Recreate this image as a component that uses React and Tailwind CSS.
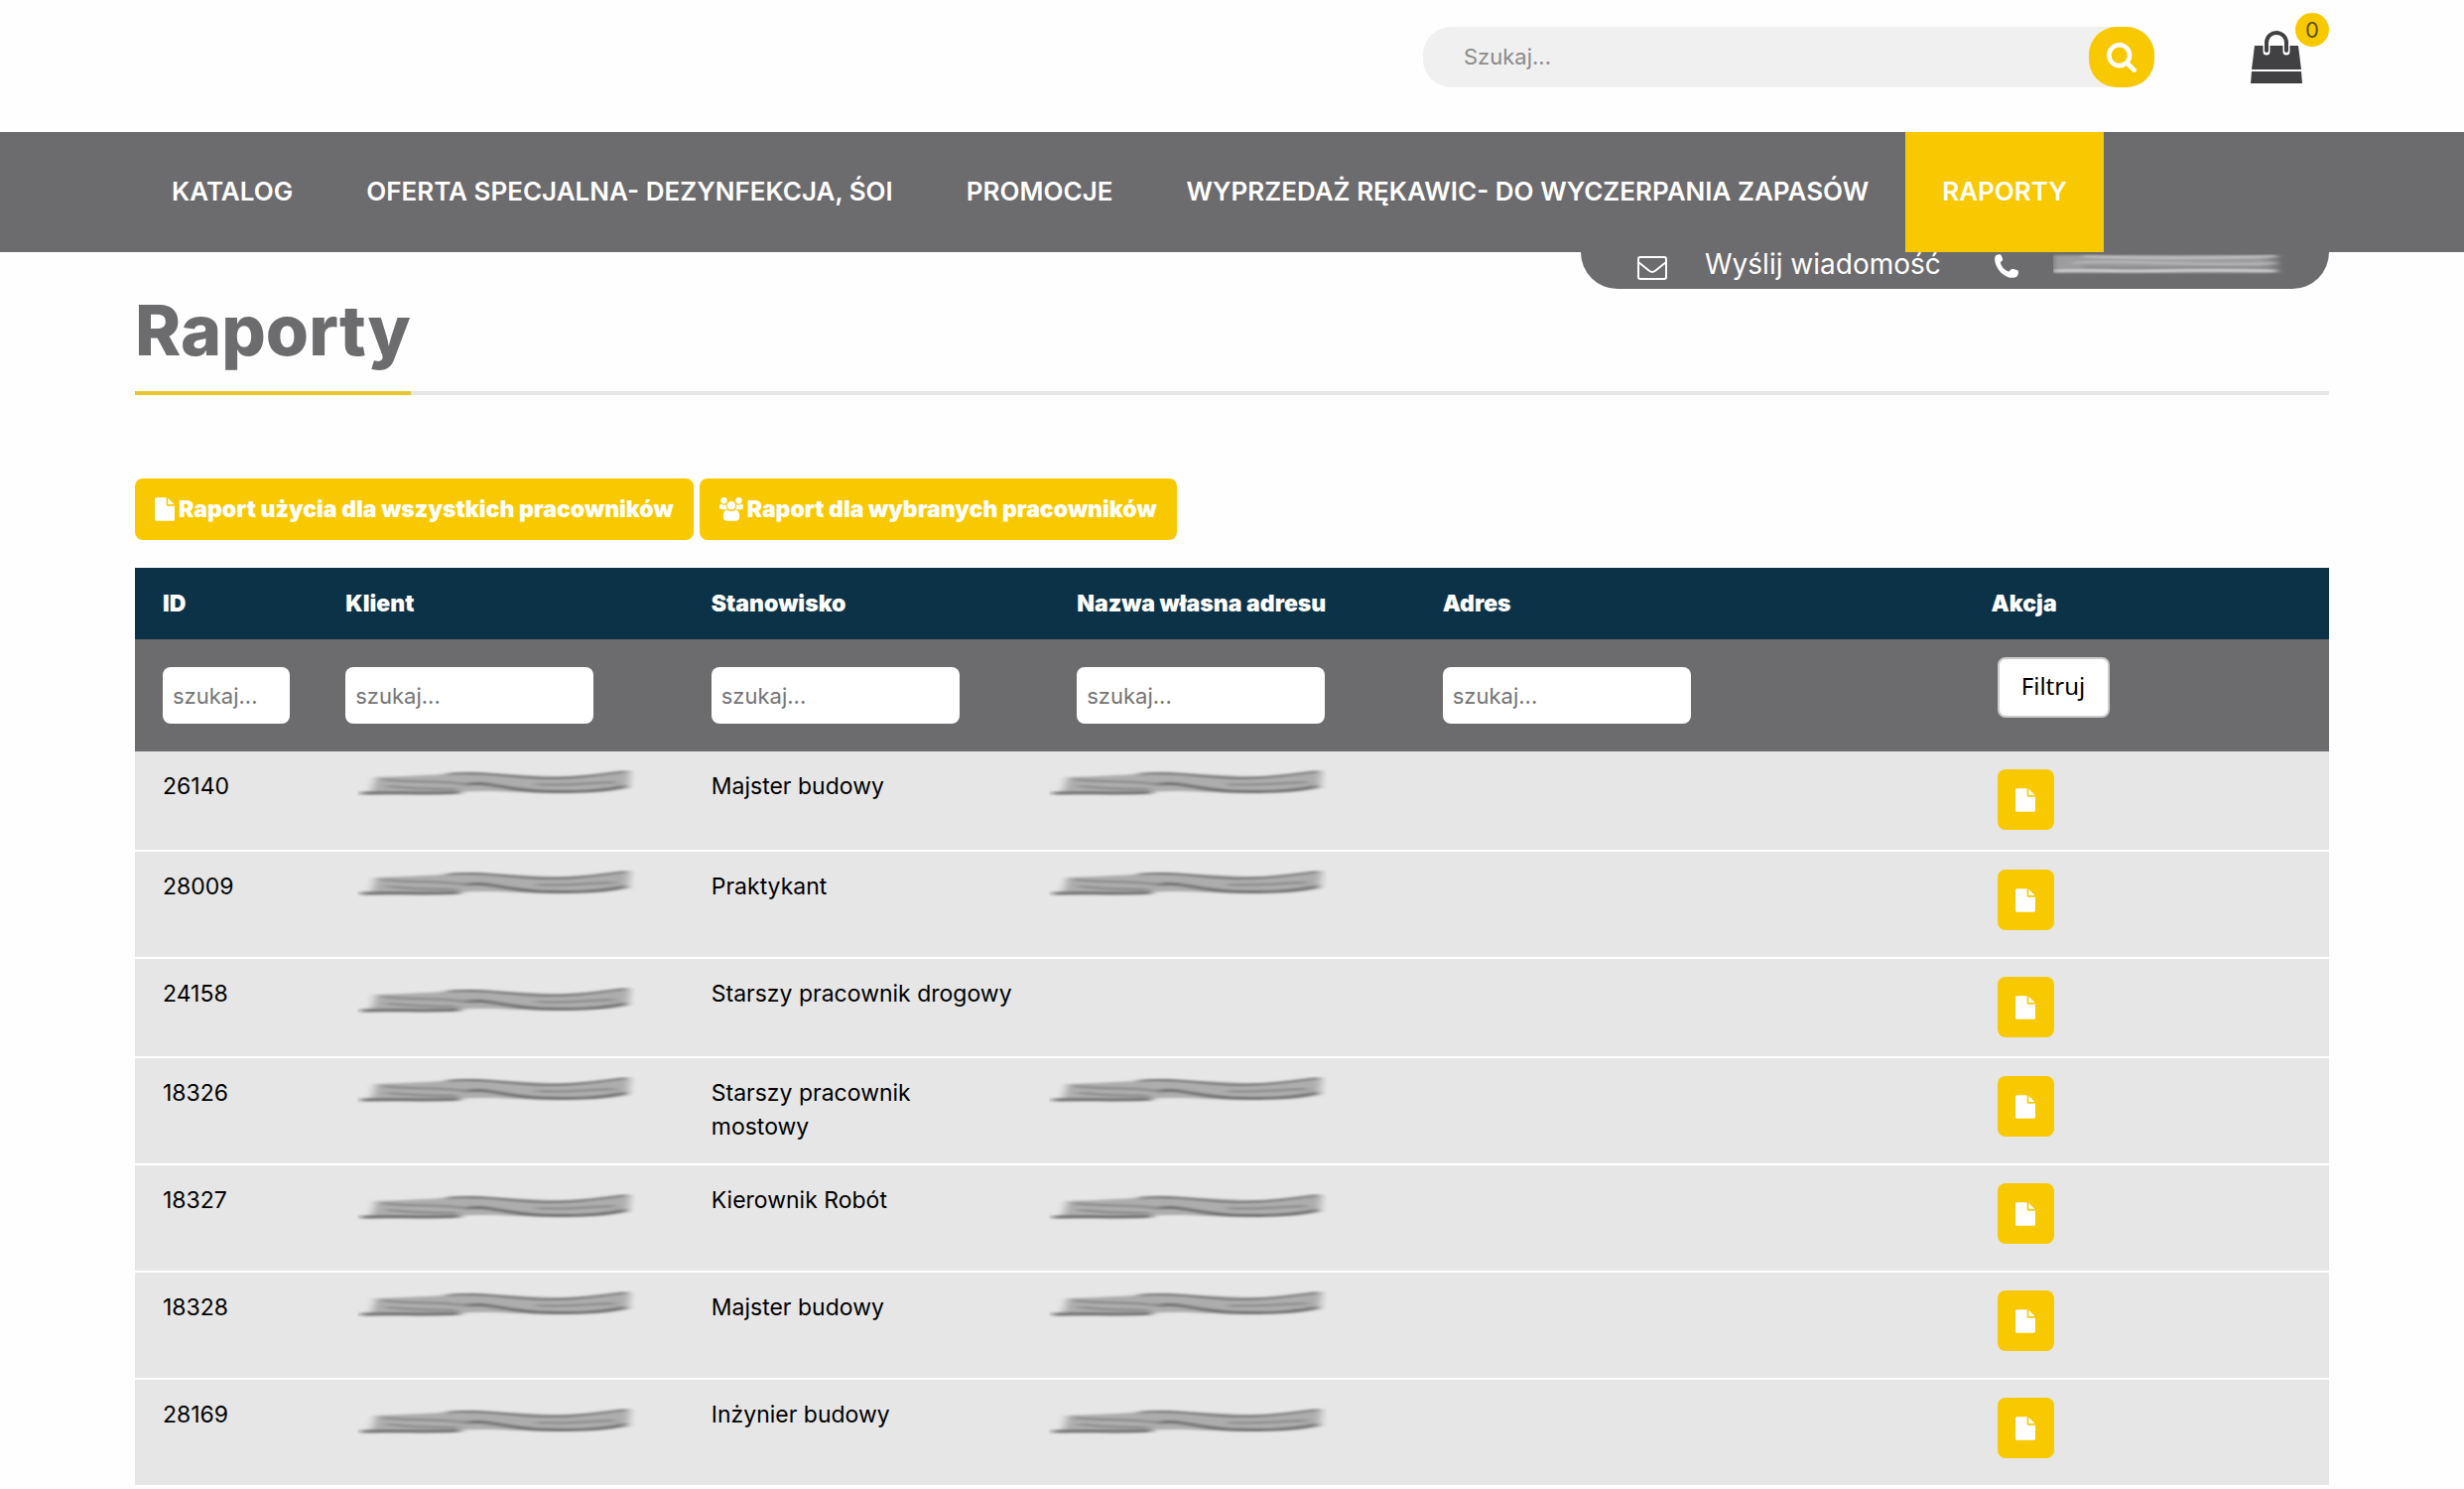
import { useState } from "react";

const navLinks = [
  { label: "KATALOG" },
  { label: "OFERTA SPECJALNA- DEZYNFEKCJA, ŚOI" },
  { label: "PROMOCJE" },
  { label: "WYPRZEDAŻ RĘKAWIC- DO WYCZERPANIA ZAPASÓW" },
  { label: "RAPORTY", active: true },
];

const columns = [
  { key: "id", label: "ID", width: "w-1/12" },
  { key: "client", label: "Klient", width: "w-2/12" },
  { key: "position", label: "Stanowisko", width: "w-2/12" },
  { key: "addressName", label: "Nazwa własna adresu", width: "w-2/12" },
  { key: "address", label: "Adres", width: "w-3/12" },
];

const rows = [
  { id: "26140", position: "Majster budowy", height: "h-[100px]", mark: "pt-[18px]", named: true },
  { id: "28009", position: "Praktykant", height: "h-[108px]", mark: "pt-[18px]", named: true },
  { id: "24158", position: "Starszy pracownik drogowy", height: "h-[100px]", mark: "pt-[28px]", named: false },
  { id: "18326", position: "Starszy pracownik\nmostowy", height: "h-[108px]", mark: "pt-[18px]", named: true },
  { id: "18327", position: "Kierownik Robót", height: "h-[108px]", mark: "pt-[28px]", named: true },
  { id: "18328", position: "Majster budowy", height: "h-[108px]", mark: "pt-[18px]", named: true },
  { id: "28169", position: "Inżynier budowy", height: "h-[108px]", mark: "pt-[28px]", named: true },
];

function FileIcon({ className }) {
  return (
    <svg viewBox="0 0 1536 1792" fill="currentColor" className={className} aria-hidden="true">
      <path d="M1024 512V40q22 14 36 28l408 408q14 14 28 36h-472zm-128 32q0 40 28 68t68 28h544v1056q0 40-28 68t-68 28H96q-40 0-68-28T0 1696V96q0-40 28-68T96 0h800v544z" />
    </svg>
  );
}

function UsersIcon({ className }) {
  return (
    <svg viewBox="0 0 24 24" fill="currentColor" className={className} aria-hidden="true">
      <circle cx="4.500" cy="3.200" r="3.200" />
      <circle cx="19.500" cy="3.200" r="3.200" />
      <path d="M1.600 6.800c2 1.100 3.800 1.100 5.400.4-.4 2 0 3.600 1.200 5H2.500C.9 12.200 0 11.500 0 10c0-1.800.4-3.200 1.600-3.200zM22.400 6.800c-2 1.100-3.800 1.100-5.400.4.400 2 0 3.600-1.200 5h5.700c1.600 0 2.500-.7 2.500-2.200 0-1.800-.4-3.200-1.600-3.200z" />
      <circle cx="12" cy="8.200" r="4.200" />
      <path d="M7.600 12.800c2.800 1.600 6 1.600 8.800 0 2.600.2 3.800 3 3.800 7 0 2.600-1.500 4-3.800 4H7.600c-2.300 0-3.800-1.400-3.800-4 0-4 1.200-6.800 3.800-7z" />
    </svg>
  );
}

function SearchIcon({ className }) {
  return (
    <svg viewBox="0 128 1664 1664" fill="currentColor" className={className} aria-hidden="true">
      <path d="M1152 832q0-185-131.500-316.500T704 384 387.500 515.500 256 832t131.500 316.500T704 1280t316.500-131.500T1152 832zm512 832q0 52-38 90t-90 38q-54 0-90-38l-343-342q-179 124-399 124-143 0-273.500-55.500t-225-150-150-225T0 832t55.500-273.500 150-225 225-150T704 128t273.500 55.500 225 150 150 225T1408 832q0 220-124 399l343 343q37 37 37 90z" />
    </svg>
  );
}

function BagIcon({ className }) {
  return (
    <svg viewBox="0 0 54 54" className={className} aria-hidden="true">
      <path d="M5 15h44l3 24H2z" fill="#414143" />
      <path d="M2 41h50l1 12H1z" fill="#414143" />
      <path d="M17 21V12a10 10 0 0 1 20 0v9" fill="none" stroke="#fff" strokeWidth="7" strokeLinecap="round" />
      <path d="M17 20V12a10 10 0 0 1 20 0v8" fill="none" stroke="#414143" strokeWidth="4" strokeLinecap="round" />
    </svg>
  );
}

function EnvelopeIcon({ className }) {
  return (
    <svg viewBox="0 0 30 24" fill="none" stroke="currentColor" strokeWidth="2" strokeLinejoin="round" className={className} aria-hidden="true">
      <rect x="1" y="1" width="28" height="22" rx="2" />
      <path d="M1.500 6.500c4 3 7 5.500 10.500 8.300 2 1.600 4 1.600 6 0 3.500-2.800 6.500-5.300 10.500-8.300" />
    </svg>
  );
}

function PhoneIcon({ className }) {
  return (
    <svg viewBox="0 0 24 24" fill="currentColor" className={className} aria-hidden="true">
      <path d="M1.500 1.200C3 .2 5 0 6 .4c1 .8 2 3.400 2.200 5 0 1.400-2.400 2-2.400 3.200.6 3.600 4.200 7.800 8.200 9 1.200.2 1.800-2.200 3.400-2.600 2 0 4.800.6 6.200 1.800.8 1 .2 4-1 5.400-1.600 1.600-5 2-8.400 1.200C7 21.400 1 13.600.2 6.600 0 4.400.2 2.400 1.500 1.200z" />
    </svg>
  );
}

// brush stroke covering confidential data
function Smudge({ className }) {
  return (
    <svg viewBox="0 0 280 28" className={className} aria-hidden="true">
      <defs>
        <filter id="smudge-blur" x="-5%" y="-30%" width="110%" height="160%">
          <feGaussianBlur stdDeviation="4 1" />
        </filter>
      </defs>
      <g filter="url(#smudge-blur)" fill="none">
        <path d="M18 8C60 7 90 4 125 4c45 0 90 8 150-2l-2 15c-40 8-100 7-135 5-40 0-80 3-126 2 4-4 5-10 6-16z" fill="#adadad" />
        <path d="M4 24c35-1 70 1 100-1" stroke="#6c6c6c" strokeWidth="3" />
        <path d="M30 17c20 2 35 3 70 3M25 10c30 4 60 0 90 6" stroke="#858585" strokeWidth="2" />
        <path d="M90 5c30-4 70 4 105 4 30 0 50-4 77-7" stroke="#6f6f6f" strokeWidth="2" />
        <path d="M112 15c20-3 35 5 70 7 35 1 60 1 90-5" stroke="#6c6c6c" strokeWidth="3" />
        <path d="M180 15c30 2 50-1 80-2" stroke="#858585" strokeWidth="2" />
      </g>
    </svg>
  );
}

function PhoneSmudge({ className }) {
  return (
    <svg viewBox="0 0 236 22" className={className} aria-hidden="true">
      <defs>
        <filter id="phone-blur" x="0" y="-20%" width="105%" height="140%">
          <feGaussianBlur stdDeviation="3 1" />
        </filter>
        <linearGradient id="phone-fade" x1="0" x2="1" y1="0" y2="0">
          <stop offset="0.900" stopColor="#9d9da0" />
          <stop offset="1" stopColor="#9d9da0" stopOpacity="0" />
        </linearGradient>
      </defs>
      <g filter="url(#phone-blur)" fill="none" strokeWidth="2">
        <path d="M0 1h232v18H0z" fill="url(#phone-fade)" />
        <path d="M0 17c30-2 60 1 100 0s80-1 125 0" stroke="#dcdcdc" />
        <path d="M30 2c50 2 130 2 195 0" stroke="#c9c9cb" />
        <path d="M20 9c50-5 120 5 205 0" stroke="#b9b9bb" />
        <path d="M30 13c70 2 140-1 190 1" stroke="#868689" />
      </g>
    </svg>
  );
}

function Header() {
  const [query, setQuery] = useState("");

  return (
    <header>
      <div className="flex h-[133px] items-start justify-end px-[136px]">
        <form onSubmit={(e) => e.preventDefault()} className="mt-[27px] flex h-[61px] w-[737px] rounded-[28px] bg-[#f0f0f0]">
          <input
            type="text"
            aria-label="Szukaj"
            placeholder="Szukaj..."
            value={query}
            onChange={(e) => setQuery(e.target.value)}
            className="min-w-0 flex-1 bg-transparent pl-[41px] text-[22px] outline-none placeholder:text-[#8b8b8b]"
          />
          <button type="submit" aria-label="Szukaj" className="flex w-[66px] items-center justify-center rounded-[28px] bg-[#f8c900] text-white">
            <SearchIcon className="size-[30px]" />
          </button>
        </form>
        <a href="#koszyk" aria-label="Koszyk" className="relative mt-[31px] mr-[26px] ml-24">
          <BagIcon className="size-[54px]" />
          <span className="absolute -top-[18px] -right-[26px] flex size-[34px] items-center justify-center rounded-full bg-[#f8c900] text-[22px] text-[#5c5114]">0</span>
        </a>
      </div>
      <nav className="bg-[#6c6b6e] px-[136px]">
        <ul className="flex">
          {navLinks.map((link) => (
            <li key={link.label}>
              <a
                href="#"
                className={`flex h-[121px] items-center px-[37px] pb-[2px] text-[26px] font-semibold whitespace-nowrap text-white ${link.active ? "bg-[#f8c900]" : ""}`}
              >
                {link.label}
              </a>
            </li>
          ))}
        </ul>
      </nav>
      <div className="px-[136px]">
        <div className="ml-auto flex h-[37px] w-[754px] items-start rounded-b-[38px] bg-[#6c6b6e] pl-[57px] text-white">
          <a href="#kontakt" className="flex items-start text-[28px] leading-[24px]">
            <EnvelopeIcon className="mt-1 mr-[38px] h-6 w-[30px]" />
            Wyślij wiadomość
          </a>
          <a href="#telefon" aria-label="Telefon" className="ml-[54px] flex items-start">
            <PhoneIcon className="mt-[2px] mr-[35px] size-6" />
            <PhoneSmudge className="mt-[2px] h-[22px] w-[236px]" />
          </a>
        </div>
      </div>
    </header>
  );
}

function ReportsTable() {
  return (
    <table className="mt-7 w-full table-fixed border-collapse text-left text-[23px] leading-[34px] text-black">
      <thead>
        <tr className="h-[72px] bg-[#0c3248] text-white">
          {columns.map((col) => (
            <th key={col.key} scope="col" className={`pl-7 font-black whitespace-nowrap ${col.width}`}>{col.label}</th>
          ))}
          <th scope="col" className="w-2/12 pl-7 font-black">Akcja</th>
        </tr>
        <tr className="h-[113px] bg-[#6c6b6e]">
          {columns.map((col) => (
            <td key={col.key} className="px-7">
              <input
                type="text"
                aria-label={col.label}
                placeholder="szukaj..."
                className="block h-[57px] w-full max-w-[250px] rounded-lg bg-white px-[10px] text-[22px] outline-none placeholder:text-[#757575]"
              />
            </td>
          ))}
          <td className="pt-[18px] pl-[34px] align-top">
            <button className="block h-[61px] w-[113px] rounded-lg border-2 border-[#ccc] bg-white pb-1 font-['Noto_Sans',sans-serif] text-[24px]">Filtruj</button>
          </td>
        </tr>
      </thead>
      <tbody>
        {rows.map((row) => (
          <tr key={row.id} className={`border-b-2 border-white bg-[#e6e6e6] align-top ${row.height}`}>
            <td className="pt-[18px] pl-7">{row.id}</td>
            <td className={`pl-10 ${row.mark}`}>
              <Smudge className="h-7 w-[280px]" />
            </td>
            <td className="pt-[18px] pl-7 whitespace-pre-line">{row.position}</td>
            <td className={row.mark}>
              {row.named && <Smudge className="h-7 w-[280px]" />}
            </td>
            <td></td>
            <td className="pt-[18px] pl-[34px]">
              <button aria-label={`Raport ${row.id}`} className="flex h-[61px] w-[57px] items-center justify-center rounded-lg bg-[#f8c900] text-white">
                <FileIcon className="h-6 w-5" />
              </button>
            </td>
          </tr>
        ))}
      </tbody>
    </table>
  );
}

function App() {
  return (
    <div className="h-screen overflow-hidden bg-[#fefefe] font-[Inter,sans-serif]">
      <Header />
      <main className="px-[136px]">
        <div className="flex border-b-4 border-[#e6e6e6]">
          <h1 className="-mb-1 border-b-4 border-[#e8c62e] pb-5 text-[70px] leading-[83px] font-extrabold text-[#6c6b6e]">Raporty</h1>
        </div>
        <div className="mt-[84px] flex gap-[6px]">
          <button className="flex h-[62px] items-center gap-1 rounded-lg bg-[#f8c900] px-5 text-[23px] font-black text-white">
            <FileIcon className="h-6 w-5" />
            Raport użycia dla wszystkich pracowników
          </button>
          <button className="flex h-[62px] items-center gap-1 rounded-lg bg-[#f8c900] px-5 text-[23px] font-black text-white">
            <UsersIcon className="size-6" />
            Raport dla wybranych pracowników
          </button>
        </div>
        <ReportsTable />
      </main>
    </div>
  );
}

export default App;
